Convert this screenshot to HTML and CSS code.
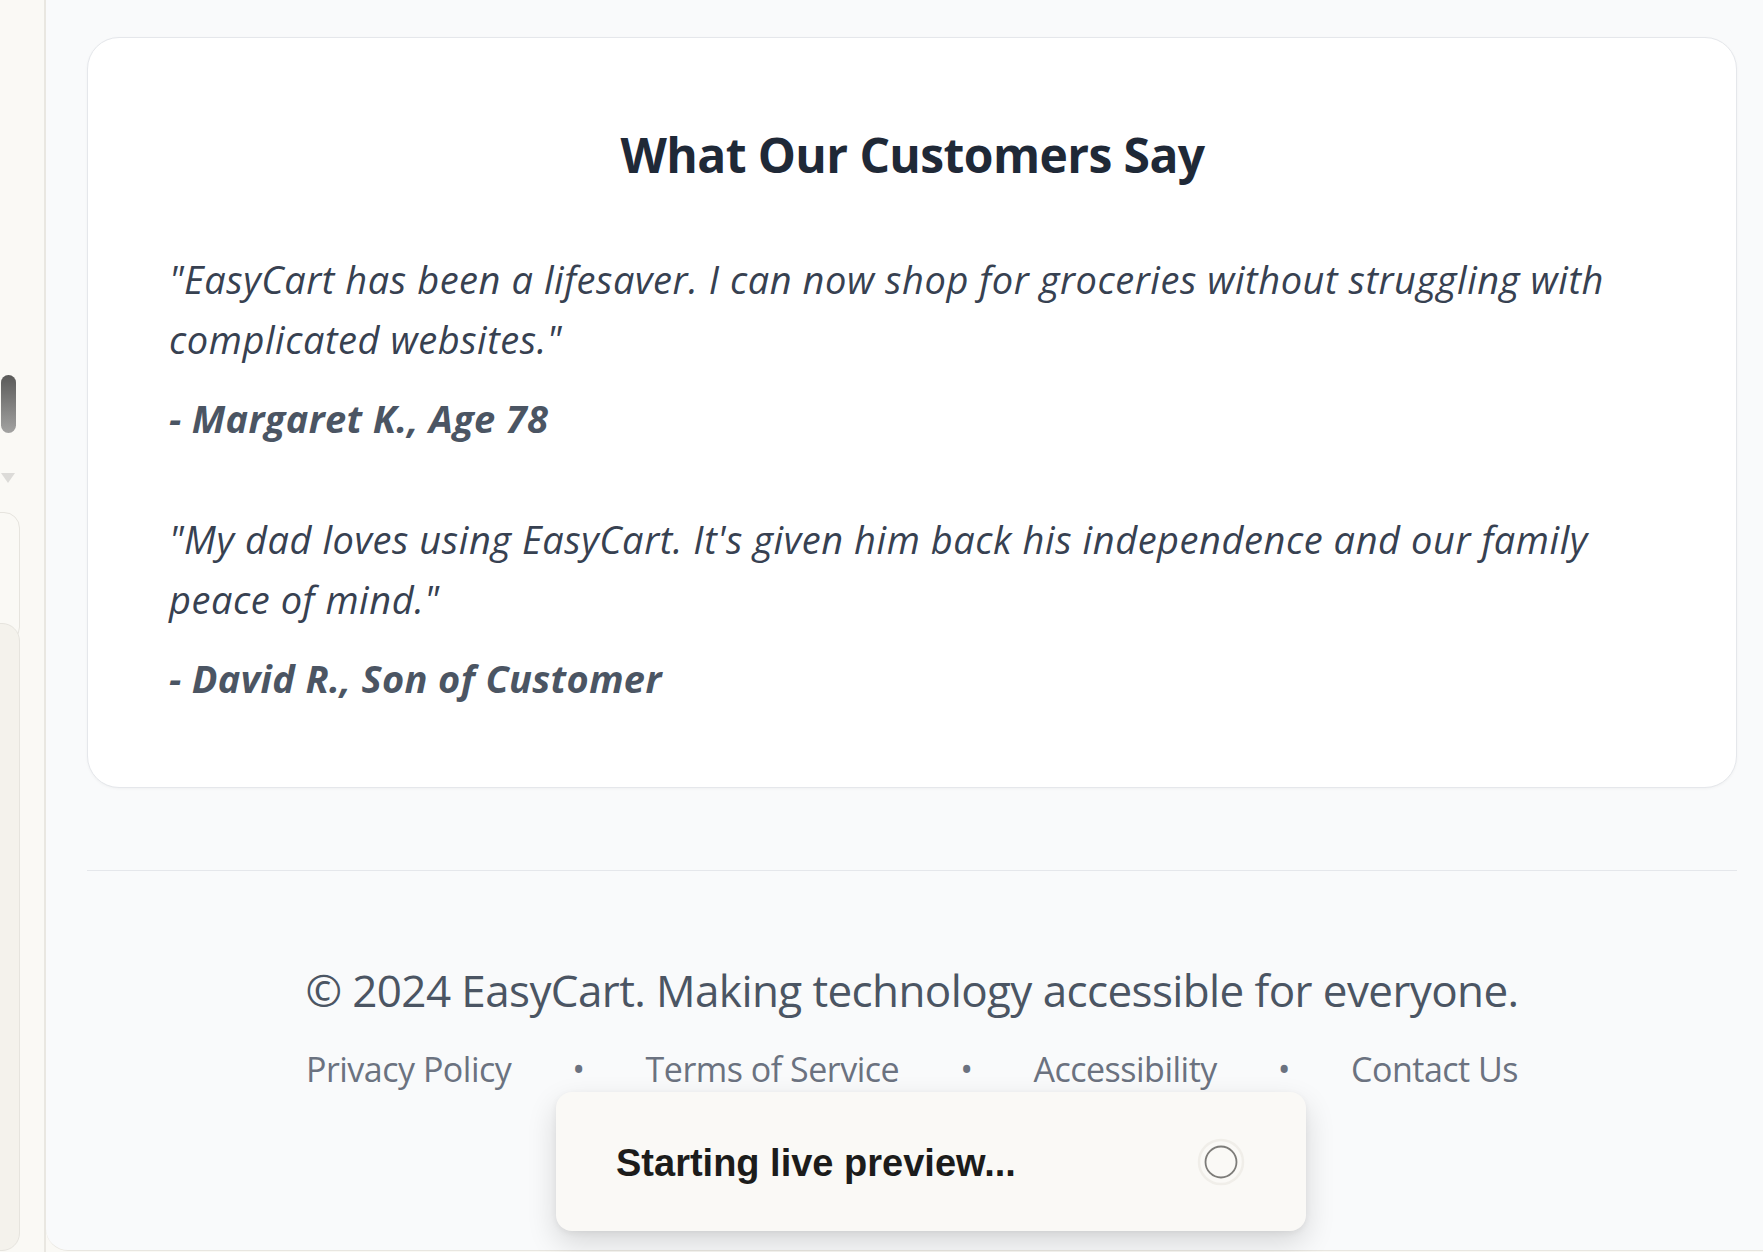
FILE: index.html
```html
<!DOCTYPE html>
<html lang="en">
<head>
<meta charset="utf-8">
<title>EasyCart – Testimonials</title>
<link rel="stylesheet" href="styles.css">
</head>
<body>
<div class="app">
  <aside class="rail">
    <div class="rail-thumb"></div>
    <div class="rail-arrow"></div>
    <div class="rail-panel rail-panel-a"></div>
    <div class="rail-panel rail-panel-b"></div>
  </aside>
  <main class="preview">
    <section class="card">
      <h2 class="card-title">What Our Customers Say</h2>
      <div class="testimonial">
        <p class="quote">"EasyCart has been a lifesaver. I can now shop for groceries without struggling with complicated websites."</p>
        <p class="author">- Margaret K., Age 78</p>
      </div>
      <div class="testimonial">
        <p class="quote">"My dad loves using EasyCart. It's given him back his independence and our family peace of mind."</p>
        <p class="author">- David R., Son of Customer</p>
      </div>
    </section>
    <hr class="divider">
    <footer class="site-footer">
      <p class="copyright">© 2024 EasyCart. Making technology accessible for everyone.</p>
      <nav class="footer-links">
        <a class="footer-link" href="#">Privacy Policy</a>
        <span class="dot">•</span>
        <a class="footer-link" href="#">Terms of Service</a>
        <span class="dot">•</span>
        <a class="footer-link" href="#">Accessibility</a>
        <span class="dot">•</span>
        <a class="footer-link" href="#">Contact Us</a>
      </nav>
    </footer>
  </main>
  <div class="toast">
    <span class="toast-text">Starting live preview...</span>
    <svg class="toast-spinner" width="48" height="48" viewBox="0 0 48 48" aria-hidden="true">
      <circle cx="24" cy="24" r="22" fill="none" stroke="#f0eee9" stroke-width="2.5"/>
      <circle cx="24" cy="24" r="15.5" fill="none" stroke="#7d7c79" stroke-width="1.8"/>
    </svg>
  </div>
</div>
</body>
</html>
```
FILE: styles.css
```css
* { box-sizing: border-box; }

html, body {
  margin: 0;
  padding: 0;
  height: 1252px;
  overflow: hidden;
  background: #faf9f5;
}

.app {
  position: relative;
  display: flex;
  height: 1252px;
}

/* left rail */
.rail {
  width: 46px;
  flex: 0 0 46px;
  height: 1252px;
  background: #faf9f5;
  border-right: 2px solid #e9e7e1;
  padding-top: 375px;
  overflow: hidden;
  display: flex;
  flex-direction: column;
}

.rail-thumb {
  margin-left: 1px;
  width: 15px;
  height: 58px;
  border-radius: 8px;
  background: linear-gradient(#5a5a59, #a3a3a2);
}

.rail-arrow {
  margin-top: 40px;
  margin-left: 1px;
  width: 0;
  height: 0;
  border-left: 7.5px solid transparent;
  border-right: 7.5px solid transparent;
  border-top: 10px solid #dcdbd8;
}

.rail-panel {
  margin-left: -24px;
  width: 44px;
  border: 1.5px solid #e6e4de;
  border-radius: 16px;
  flex: 0 0 auto;
}

.rail-panel-a {
  margin-top: 29px;
  height: 131px;
  background: #faf9f5;
}

.rail-panel-b {
  margin-top: -20px;
  height: 628px;
  background: #f4f2ec;
  border-radius: 18px;
}

/* preview pane */
.preview {
  flex: 1;
  background: #f9fafb;
  border-bottom: 1px solid #e8e6e0;
  border-bottom-left-radius: 22px;
  margin-bottom: 1px;
  height: 1251px;
  padding: 37px 26px 0 41px;
  overflow: hidden;
  font-family: "Open Sans", "Noto Sans", sans-serif;
}

.card {
  background: #ffffff;
  border: 1px solid #e5e7eb;
  border-radius: 32px;
  box-shadow: 0 1px 3px rgba(0, 0, 0, 0.04);
  padding: 87px 80px 80px 81px;
}

.card-title {
  margin: 0 0 64px;
  text-align: center;
  font-size: 48px;
  line-height: 60px;
  font-weight: 700;
  letter-spacing: -0.6px;
  color: #1f2937;
}

.testimonial + .testimonial {
  margin-top: 62px;
}

.quote {
  margin: 0 0 21px;
  font-size: 38px;
  line-height: 60px;
  font-style: italic;
  letter-spacing: 0.55px;
  color: #374151;
}

.author {
  margin: 0;
  font-size: 38px;
  line-height: 57px;
  font-style: italic;
  font-weight: 700;
  letter-spacing: 0.35px;
  color: #4b5563;
}

.divider {
  margin: 82px 0 0;
  border: 0;
  border-top: 1px solid #e5e7eb;
  height: 0;
}

.site-footer {
  padding-top: 86px;
  text-align: center;
}

.copyright {
  margin: 0 0 21px;
  font-size: 44px;
  line-height: 66px;
  letter-spacing: -0.6px;
  color: #4b5563;
}

.footer-links {
  display: flex;
  justify-content: center;
  align-items: center;
  gap: 61px;
  font-size: 34px;
  line-height: 51px;
  letter-spacing: -0.5px;
}

.footer-link {
  color: #6b7280;
  text-decoration: none;
}

.dot {
  color: #6b7280;
}

/* toast */
.toast {
  position: absolute;
  left: 556px;
  top: 1092px;
  width: 750px;
  height: 139px;
  display: flex;
  align-items: center;
  justify-content: space-between;
  padding: 4px 61px 0 60px;
  background: #faf9f6;
  border-radius: 16px;
  box-shadow: 0 12px 30px rgba(0, 0, 0, 0.14), 0 2px 6px rgba(0, 0, 0, 0.06);
}

.toast-text {
  font-family: "Liberation Sans", Arial, sans-serif;
  font-size: 38px;
  font-weight: 700;
  letter-spacing: 0;
  color: #1c1c1b;
}

.toast-spinner {
  display: block;
  margin-top: -4px;
}
```
